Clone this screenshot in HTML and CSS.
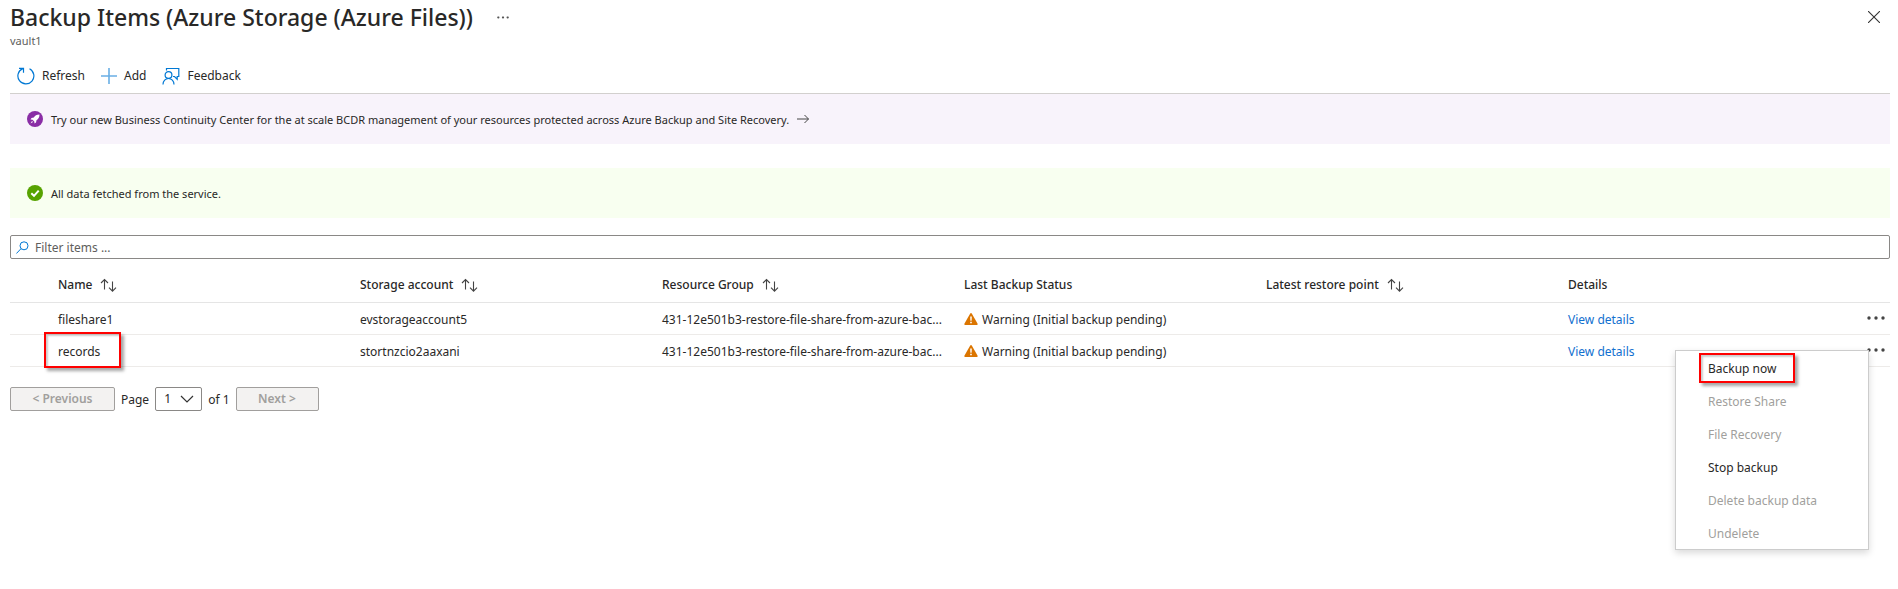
FILE: index.html
```html
<!DOCTYPE html>
<html lang="en">
<head>
<meta charset="utf-8">
<title>Backup Items</title>
<link rel="stylesheet" href="styles.css">
</head>
<body>
<svg class="defs" width="0" height="0" aria-hidden="true">
  <symbol id="sort" viewBox="0 0 18 14">
    <path d="M4.500 11.500V1.500M1 5l3.500-3.500L8 5M12.500 3.500v9.500M9 9.700l3.500 3.500 3.500-3.500" fill="none" stroke="#444" stroke-width="1.100"/>
  </symbol>
  <symbol id="warn" viewBox="0 0 14 12">
    <path d="M6.200.600Q7-.5 7.800.600L13.600 10.700Q14 12 12.800 12H1.200Q0 12 .4 10.700Z" fill="#db7500"/>
    <path d="M6.200 3.500h1.600l-.2 4.200H6.400ZM6.200 8.700h1.600v1.500H6.200Z" fill="#fff"/>
  </symbol>
  <symbol id="dots" viewBox="0 0 18 4">
    <circle cx="2" cy="2" r="1.700"/><circle cx="9" cy="2" r="1.700"/><circle cx="16" cy="2" r="1.700"/>
  </symbol>
</svg>
<main class="blade">
  <header class="blade-header">
    <div class="title-row">
      <h1 class="title">Backup Items (Azure Storage (Azure Files))</h1>
      <button class="icon-button more" aria-label="More"><svg width="12" height="3" viewBox="0 0 18 4" fill="#555"><use href="#dots"/></svg></button>
      <button class="icon-button close" aria-label="Close"><svg width="12" height="12" viewBox="0 0 12 12"><path d="M0 0l12 12M12 0L0 12" stroke="#333" stroke-width="1.100"/></svg></button>
    </div>
    <p class="subtitle">vault1</p>
  </header>
  <nav class="toolbar">
    <button class="command"><svg width="18" height="18" viewBox="0 0 18 18" fill="none" stroke="#0078d4" stroke-width="1.200"><path d="M12.500 1.800a8 8 0 1 1-6.800-.2M2 1.300h4.500v4.500"/></svg>Refresh</button>
    <button class="command"><svg width="16" height="18" viewBox="0 0 16 18" stroke="#69afe5" stroke-width="1.600"><path d="M8 1v16M0 9h16"/></svg>Add</button>
    <button class="command"><svg width="18" height="18" viewBox="0 0 18 18" fill="none" stroke="#0078d4" stroke-width="1.200"><path d="M4.500 3.500V1.500h12.300v8h-1.600v2.700l-2.700-2.700h-1.500"/><circle cx="6.500" cy="8" r="3.400"/><path d="M1 17.500c0-3.500 2.500-6 5.500-6s5.500 2.500 5.500 6"/></svg>Feedback</button>
  </nav>
  <section class="banner banner-promo">
    <svg width="16" height="16" viewBox="0 0 16 16"><circle cx="8" cy="8" r="8" fill="#8a2da5"/><path d="M12.500 3.500c-3 0-4.500 1.200-5.700 3L4.500 7l-1 1.500 2 .2 1.800 1.800.2 2L9 11.500l.5-2.300c1.800-1.200 3-2.700 3-5.700ZM5 10l-1.500 2.500L6 11Z" fill="#fff"/></svg>
    <span class="banner-text">Try our new Business Continuity Center for the at scale BCDR management of your resources protected across Azure Backup and Site Recovery.</span>
    <svg width="12" height="10" viewBox="0 0 12 10" fill="none" stroke="#444"><path d="M0 5h11.500M7.500 1l4 4-4 4"/></svg>
  </section>
  <section class="banner banner-success">
    <svg width="16" height="16" viewBox="0 0 16 16"><circle cx="8" cy="8" r="8" fill="#57a300"/><path d="M4.300 8.200l2.700 2.600 4.700-5.200" fill="none" stroke="#fff" stroke-width="2"/></svg>
    <span class="banner-text">All data fetched from the service.</span>
  </section>
  <label class="filter">
    <svg width="13" height="13" viewBox="0 0 13 13" fill="none" stroke="#0078d4" stroke-width="1"><circle cx="8" cy="4.800" r="4"/><path d="M5 7.700L.4 12.500"/></svg>
    <input class="filter-input" type="text" placeholder="Filter items ..." aria-label="Filter items">
  </label>
  <table class="grid">
    <colgroup><col class="col-pad"><col><col><col><col><col><col><col class="col-actions"></colgroup>
    <thead>
      <tr>
        <th></th>
        <th>Name<svg class="sort" width="18" height="14"><use href="#sort"/></svg></th>
        <th>Storage account<svg class="sort" width="18" height="14"><use href="#sort"/></svg></th>
        <th>Resource Group<svg class="sort" width="18" height="14"><use href="#sort"/></svg></th>
        <th>Last Backup Status</th>
        <th>Latest restore point<svg class="sort" width="18" height="14"><use href="#sort"/></svg></th>
        <th>Details</th>
        <th></th>
      </tr>
    </thead>
    <tbody>
      <tr>
        <td></td>
        <td>fileshare1</td>
        <td>evstorageaccount5</td>
        <td>431-12e501b3-restore-file-share-from-azure-bac...</td>
        <td><svg class="warn" width="14" height="12"><use href="#warn"/></svg>Warning (Initial backup pending)</td>
        <td></td>
        <td><a href="#">View details</a></td>
        <td class="actions"><button class="icon-button" aria-label="Row actions"><svg width="18" height="4" fill="#444"><use href="#dots"/></svg></button></td>
      </tr>
      <tr>
        <td></td>
        <td><span class="marked marked-row">records</span></td>
        <td>stortnzcio2aaxani</td>
        <td>431-12e501b3-restore-file-share-from-azure-bac...</td>
        <td><svg class="warn" width="14" height="12"><use href="#warn"/></svg>Warning (Initial backup pending)</td>
        <td></td>
        <td><a href="#">View details</a></td>
        <td class="actions"><button class="icon-button" aria-label="Row actions"><svg width="18" height="4" fill="#444"><use href="#dots"/></svg></button>
          <div class="menu" role="menu">
            <button class="menu-item" role="menuitem"><span class="marked marked-menu">Backup now</span></button>
            <button class="menu-item" role="menuitem" disabled>Restore Share</button>
            <button class="menu-item" role="menuitem" disabled>File Recovery</button>
            <button class="menu-item" role="menuitem">Stop backup</button>
            <button class="menu-item" role="menuitem" disabled>Delete backup data</button>
            <button class="menu-item" role="menuitem" disabled>Undelete</button>
          </div>
        </td>
      </tr>
    </tbody>
  </table>
  <nav class="pager">
    <button class="page-button previous" disabled>&lt; Previous</button>
    <label class="pager-text" for="page">Page</label>
    <span class="select-wrap"><select id="page" class="page-select"><option>1</option></select><svg class="chevron" width="14" height="8" viewBox="0 0 14 8"><path d="M1 1l6 6 6-6" fill="none" stroke="#333" stroke-width="1.200"/></svg></span>
    <span class="pager-text">of 1</span>
    <button class="page-button next" disabled>Next &gt;</button>
  </nav>
</main>
</body>
</html>
```
FILE: styles.css
```css
* { box-sizing: border-box; }
body {
  margin: 0;
  background: #fff;
  color: #292827;
  font: 12px/18px "Noto Sans", "Segoe UI", sans-serif;
}
button, input, select { font: inherit; color: inherit; }
button { border: 0; padding: 0; background: none; }
a { color: #1170cf; text-decoration: none; }
svg { flex: none; }
.defs { position: absolute; }
.blade { min-height: 100vh; padding: 0 8px 0 10px; }
.title-row { display: flex; align-items: center; height: 34px; }
.title { margin: 0; font-size: 23px; line-height: 34px; font-weight: 500; white-space: nowrap; }
.icon-button { display: flex; align-items: center; justify-content: center; }
.more { margin-left: 24px; }
.close { margin-left: auto; margin-right: 10px; }
.subtitle { margin: 0; font-size: 11px; line-height: 14px; color: #605e5c; }
.toolbar {
  display: flex;
  gap: 16px;
  height: 46px;
  padding: 10px 7px 0;
  border-bottom: 1px solid #d2d0ce;
}
.command { display: flex; align-items: center; gap: 7px; height: 35px; }
.banner { display: flex; align-items: center; gap: 8px; height: 50px; padding: 0 17px; font-size: 11px; }
.banner-text { padding-top: 2px; }
.banner-promo { background: #f8f3fb; }
.banner-success { margin-top: 24px; background: #f8fff0; }
.filter {
  display: flex;
  align-items: center;
  gap: 6px;
  height: 24px;
  margin-top: 17px;
  padding: 0 5px;
  border: 1px solid #8a8886;
  border-radius: 2px;
}
.filter-input { flex: 1; border: 0; padding: 1px 0 0; outline: 0; background: none; }
.filter-input::placeholder { color: #605e5c; opacity: 1; }
.grid { width: 100%; table-layout: fixed; border-collapse: collapse; margin-top: 8px; }
.col-pad { width: 48px; }
.col-actions { width: 20px; }
.grid th { height: 35px; padding: 1px 0 0; text-align: left; font-weight: 500; white-space: nowrap; border-bottom: 1px solid #e5e5e5; }
.grid td { height: 32px; padding: 4px 0 0; white-space: nowrap; border-bottom: 1px solid #edebe9; }
.sort { margin-left: 8px; vertical-align: -3px; }
.warn { margin-right: 4px; vertical-align: -1px; }
.grid .actions { position: relative; padding: 0; }
.actions .icon-button { width: 18px; height: 16px; margin-left: -3px; }
.marked { position: relative; }
.marked::after {
  content: "";
  position: absolute;
  border: 2px solid #f00;
  box-shadow: 3px 3px 3px rgba(0, 0, 0, .35), inset 2px 2px 2px rgba(0, 0, 0, .2);
}
.marked-row::after { inset: -11px -21px -8px -14px; }
.marked-menu::after { inset: -7px -18px -6px -9px; }
.menu {
  position: absolute;
  top: 15px;
  right: 21px;
  z-index: 1;
  width: 194px;
  background: #fff;
  border: 1px solid #ccc;
  box-shadow: 0 3px 7px rgba(0, 0, 0, .15);
}
.menu .menu-item { display: block; width: 100%; height: 33px; padding: 4px 0 0 32px; text-align: left; }
.menu-item:disabled { color: #a19f9d; }
.pager { display: flex; align-items: center; gap: 6px; margin-top: 20px; }
.pager-text { padding-top: 3px; }
.page-button { height: 24px; border: 1px solid #a19f9d; border-radius: 2px; background: #f3f2f1; color: #a19f9d; font-weight: 600; }
.previous { width: 105px; }
.next { width: 83px; }
.select-wrap { position: relative; display: flex; }
.page-select { appearance: none; width: 47px; height: 24px; padding: 0 8px; border: 1px solid #8a8886; border-radius: 2px; background: #fff; }
.chevron { position: absolute; right: 8px; top: 8px; pointer-events: none; }
```
